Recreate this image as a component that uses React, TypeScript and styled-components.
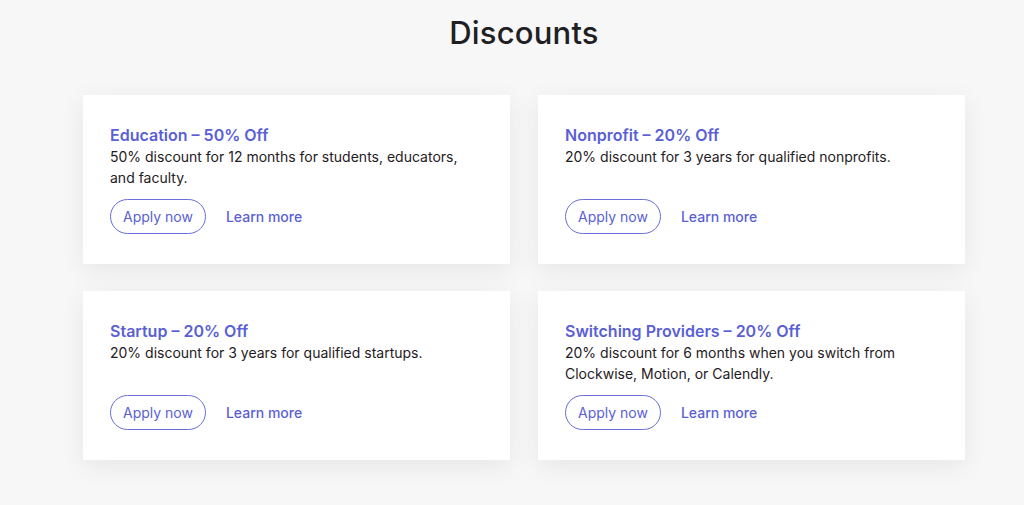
import React from "react";
import styled, { createGlobalStyle } from "styled-components";

const GlobalStyle = createGlobalStyle`
  html, body {
    margin: 0;
    padding: 0;
    background: #f7f7f7;
  }
  body {
    font-family: Inter, "Noto Sans", sans-serif;
    color: #1f2023;
  }
  * {
    box-sizing: border-box;
  }
`;

const discounts = [
  {
    title: "Education – 50% Off",
    text: "50% discount for 12 months for students, educators, and faculty.",
  },
  {
    title: "Nonprofit – 20% Off",
    text: "20% discount for 3 years for qualified nonprofits.",
  },
  {
    title: "Startup – 20% Off",
    text: "20% discount for 3 years for qualified startups.",
  },
  {
    title: "Switching Providers – 20% Off",
    text: "20% discount for 6 months when you switch from Clockwise, Motion, or Calendly.",
  },
];

const App = () => {
  return (
    <>
      <GlobalStyle />
      <Page>
        <Heading>Discounts</Heading>
        <Grid>
          {discounts.map((d) => (
            <Card key={d.title}>
              <CardTitle>{d.title}</CardTitle>
              <CardText>{d.text}</CardText>
              <Actions>
                <ApplyButton type="button">Apply now</ApplyButton>
                <LearnLink href="#">Learn more</LearnLink>
              </Actions>
            </Card>
          ))}
        </Grid>
      </Page>
    </>
  );
};

const Page = styled.main`
  padding: 14px 59px 40px 83px;
`;

const Heading = styled.h1`
  margin: 0 0 43px;
  text-align: center;
  font-size: 31px;
  line-height: 38px;
  font-weight: 500;
  color: #1f2023;
  letter-spacing: 0.2px;
`;

const Grid = styled.div`
  display: grid;
  grid-template-columns: 1fr 1fr;
  column-gap: 28px;
  row-gap: 27px;
`;

const Card = styled.section`
  display: flex;
  flex-direction: column;
  min-height: 169px;
  padding: 29px 27px 30px;
  background: #ffffff;
  box-shadow: 0 6px 24px rgba(0, 0, 0, 0.07);
`;

const CardTitle = styled.h2`
  margin: 0;
  font-size: 16px;
  line-height: 22px;
  font-weight: 600;
  color: #5a5fd6;
`;

const CardText = styled.p`
  margin: 0 0 11px;
  max-width: 360px;
  font-size: 14px;
  line-height: 21px;
  color: #1f2023;
`;

const Actions = styled.div`
  display: flex;
  align-items: center;
  gap: 20px;
  margin-top: auto;
`;

const ApplyButton = styled.button`
  height: 35px;
  padding: 0 12px;
  border: 1px solid #6a6ed8;
  border-radius: 18px;
  background: transparent;
  font-family: inherit;
  font-size: 14px;
  color: #5a5fd6;
  cursor: pointer;
`;

const LearnLink = styled.a`
  font-size: 14px;
  font-weight: 500;
  color: #5a5fd6;
  text-decoration: none;
`;

export default App;
